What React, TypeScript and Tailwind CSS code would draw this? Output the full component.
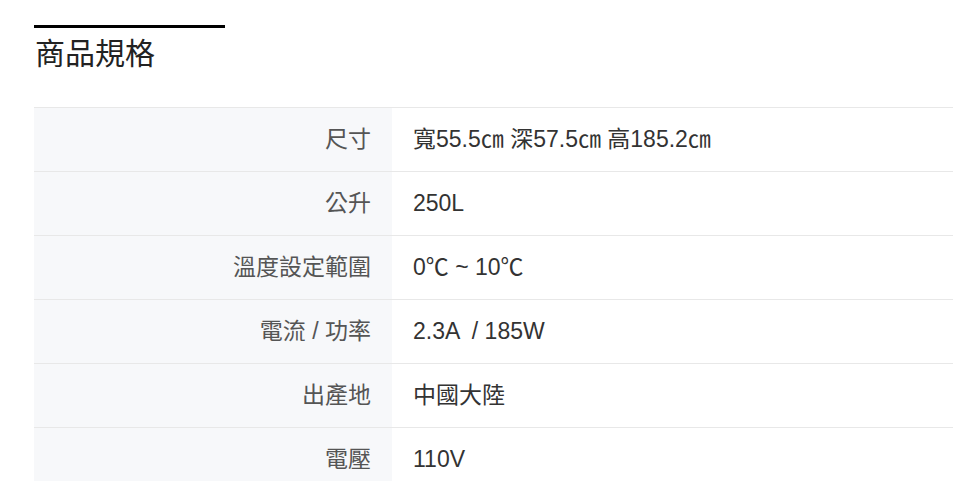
const specs = [
  { label: "尺寸", value: "寬55.5㎝ 深57.5㎝ 高185.2㎝" },
  { label: "公升", value: "250L" },
  { label: "溫度設定範圍", value: "0℃ ~ 10℃" },
  { label: "電流 / 功率", value: "2.3A  / 185W" },
  { label: "出產地", value: "中國大陸" },
  { label: "電壓", value: "110V" },
];

export default function App() {
  return (
    <div
      className="w-[953px] h-[481px] overflow-hidden bg-white pl-[34px] pt-[25px]"
      style={{ fontFamily: '"Liberation Sans", Arial, "Noto Sans CJK TC", sans-serif' }}
    >
      {/* Section heading */}
      <div className="w-[191px] h-[3px] bg-black" />
      <h2 className="mt-[8px] text-[30px] leading-[36px] text-[#222] font-normal pl-[1px]">商品規格</h2>

      {/* Spec table */}
      <div className="mt-[35px] border-t border-[#e8e8e8]">
        {specs.map((row) => (
          <div key={row.label} className="flex h-[64px] border-b border-[#e8e8e8]">
            <div className="w-[358px] shrink-0 bg-[#f7f8fa] flex items-center justify-end pr-[21px] text-[23px] text-[#555] whitespace-pre">
              {row.label}
            </div>
            <div className="flex-1 flex items-center pl-[21px] text-[23px] text-[#333] whitespace-pre">
              {row.value}
            </div>
          </div>
        ))}
      </div>
    </div>
  );
}
